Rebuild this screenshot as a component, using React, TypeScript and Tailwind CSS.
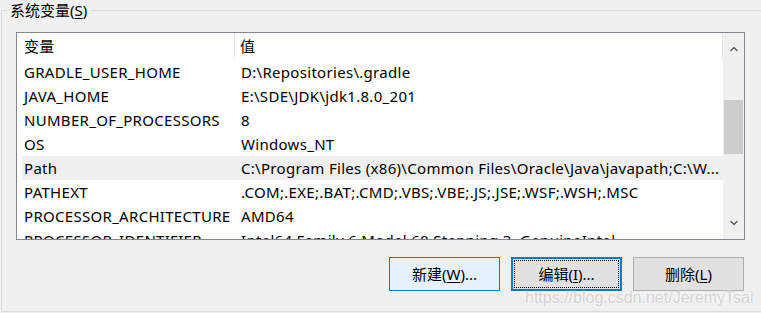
import { ChevronUp, ChevronDown } from "lucide-react";

const rows: [string, string][] = [
  ["GRADLE_USER_HOME", "D:\\Repositories\\.gradle"],
  ["JAVA_HOME", "E:\\SDE\\JDK\\jdk1.8.0_201"],
  ["NUMBER_OF_PROCESSORS", "8"],
  ["OS", "Windows_NT"],
  ["Path", "C:\\Program Files (x86)\\Common Files\\Oracle\\Java\\javapath;C:\\W..."],
  ["PATHEXT", ".COM;.EXE;.BAT;.CMD;.VBS;.VBE;.JS;.JSE;.WSF;.WSH;.MSC"],
  ["PROCESSOR_ARCHITECTURE", "AMD64"],
  ["PROCESSOR_IDENTIFIER", "Intel64 Family 6 Model 60 Stepping 3, GenuineIntel"],
];

function Btn({ label, hot, tail, variant }: { label: string; hot: string; tail: string; variant: "hover" | "focus" | "normal" }) {
  const text = (
    <span>
      {label}(<span className="underline underline-offset-2">{hot}</span>){tail}
    </span>
  );
  if (variant === "focus") {
    return (
      <div className="w-[111px] h-[34px] border-2 border-[#0078d7] bg-[#e1e1e1] p-px">
        <div className="h-full w-full border border-dotted border-black flex items-center justify-center">{text}</div>
      </div>
    );
  }
  return (
    <div
      className={
        variant === "hover"
          ? "w-[111px] h-[34px] border border-[#0078d7] bg-[#e5f1fb] flex items-center justify-center"
          : "w-[111px] h-[34px] border border-[#adadad] bg-[#e1e1e1] flex items-center justify-center"
      }
    >
      {text}
    </div>
  );
}

export default function App() {
  return (
    <div
      className="relative w-[761px] h-[313px] overflow-hidden bg-[#f0f0f0] text-[15px] text-black"
      style={{ fontFamily: '"Noto Sans", "Noto Sans CJK SC", sans-serif' }}
    >
      {/* Group box */}
      <div className="relative mt-[10px] ml-px w-[770px] h-[302px] border border-[#dcdcdc]">
        <div className="absolute left-[5px] -top-[10px] bg-[#f0f0f0] px-[3px] leading-[18px]">
          系统变量(<span className="underline underline-offset-2">S</span>)
        </div>

        {/* List view */}
        <div className="ml-[14px] mt-[21px] w-[729px] h-[208px] border border-[#828790] bg-white flex overflow-hidden">
          <div className="w-[706px] flex flex-col overflow-hidden tracking-[0.3px]">
            <div className="h-[27px] flex items-center shrink-0">
              <div className="w-[218px] h-full pl-[7px] flex items-center border-r border-[#e5e5e5]">变量</div>
              <div className="flex-1 h-full pl-[5px] flex items-center border-r border-[#e5e5e5]">值</div>
            </div>
            {rows.map(([k, v]) => (
              <div
                key={k}
                className={
                  "ml-[5px] h-[24px] shrink-0 flex items-center whitespace-nowrap " +
                  (k === "Path" ? "bg-[#efefef]" : "")
                }
              >
                <div className="w-[219px] pl-[2px] shrink-0">{k}</div>
                <div className="flex-1 overflow-hidden">{v}</div>
              </div>
            ))}
          </div>

          {/* Scrollbar */}
          <div className="w-[21px] bg-[#f0f0f0] flex flex-col">
            <div className="h-[22px] flex items-end justify-center">
              <ChevronUp className="w-[12px] h-[12px] text-[#606060]" strokeWidth={3} />
            </div>
            <div className="flex-1 flex flex-col">
              <div className="h-[45px]" />
              <div className="h-[54px] mx-px bg-[#cdcdcd]" />
            </div>
            <div className="h-[22px] flex items-start justify-center">
              <ChevronDown className="w-[12px] h-[12px] text-[#606060]" strokeWidth={3} />
            </div>
          </div>
        </div>

        {/* Buttons */}
        <div className="ml-[14px] mt-[17px] w-[728px] flex justify-end gap-[11px]">
          <Btn label="新建" hot="W" tail="..." variant="hover" />
          <Btn label="编辑" hot="I" tail="..." variant="focus" />
          <Btn label="删除" hot="L" tail="" variant="normal" />
        </div>
      </div>

      {/* Watermark */}
      <div
        className="absolute left-[525px] top-[286px] text-[16px] text-[#d2d2d2] whitespace-nowrap"
        style={{ fontFamily: '"Liberation Sans", sans-serif', textShadow: "0 0 2px #fff, 0 0 1px #fff" }}
      >
        https://blog.csdn.net/JeremyTsai
      </div>
    </div>
  );
}
